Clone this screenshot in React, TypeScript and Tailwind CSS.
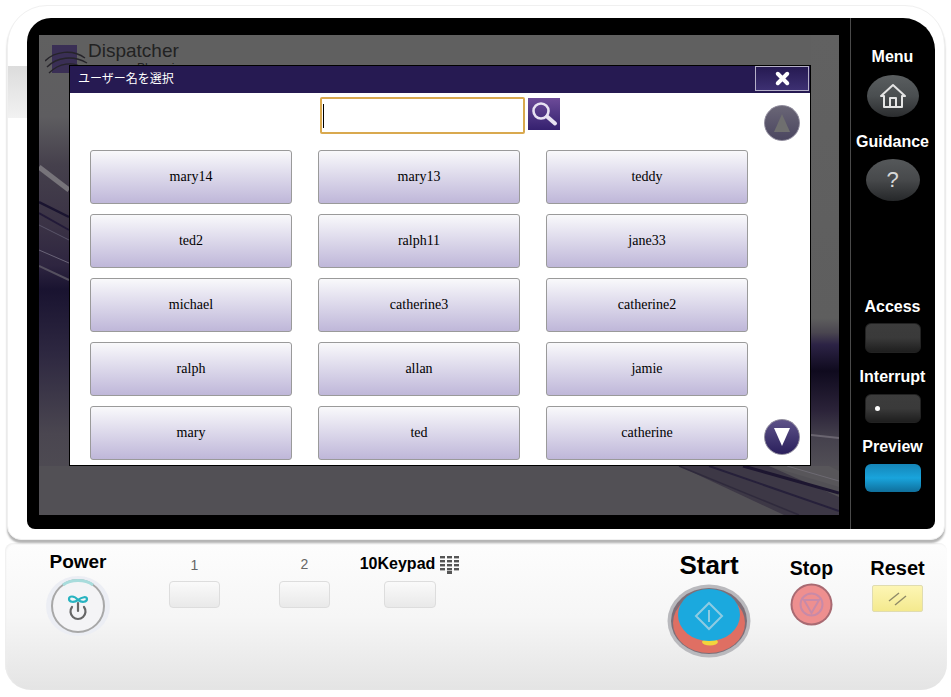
import React from 'react';
import { X } from 'lucide-react';

const users = [
  'mary14', 'mary13', 'teddy',
  'ted2', 'ralph11', 'jane33',
  'michael', 'catherine3', 'catherine2',
  'ralph', 'allan', 'jamie',
  'mary', 'ted', 'catherine',
];

const Wallpaper = () => (
  <svg className="absolute inset-0" width="800" height="480" viewBox="0 0 800 480">
    <defs>
      <linearGradient id="leftStrip" x1="0" y1="0" x2="0" y2="480" gradientUnits="userSpaceOnUse">
        <stop offset="0" stopColor="#606060" />
        <stop offset="0.17" stopColor="#5e5d60" />
        <stop offset="0.27" stopColor="#45404c" />
        <stop offset="0.4" stopColor="#3a3245" />
        <stop offset="0.48" stopColor="#2e2540" />
        <stop offset="0.53" stopColor="#191330" />
        <stop offset="0.66" stopColor="#2d2740" />
        <stop offset="0.83" stopColor="#4a4650" />
        <stop offset="1" stopColor="#525055" />
      </linearGradient>
      <linearGradient id="rightStrip" x1="0" y1="0" x2="0" y2="480" gradientUnits="userSpaceOnUse">
        <stop offset="0" stopColor="#616161" />
        <stop offset="0.59" stopColor="#5e5e5e" />
        <stop offset="0.62" stopColor="#4a4650" />
        <stop offset="0.645" stopColor="#2c2345" />
        <stop offset="0.7" stopColor="#0f0a1e" />
        <stop offset="0.78" stopColor="#2a2238" />
        <stop offset="0.84" stopColor="#45414d" />
        <stop offset="0.93" stopColor="#58565a" />
        <stop offset="1" stopColor="#3a3545" />
      </linearGradient>
    </defs>
    <rect width="800" height="480" fill="#606060" />
    <rect width="30" height="480" fill="url(#leftStrip)" />
    <rect x="772" width="28" height="480" fill="url(#rightStrip)" />
    <rect y="431" width="800" height="49" fill="#525055" />
    <polygon points="640,431 730,431 800,462 800,480 745,480" fill="#3d3846" />
    <polygon points="730,431 790,431 800,436 800,452" fill="#58565a" />
    <g fill="none">
      <path d="M0 132 L30 155" stroke="#77747a" strokeWidth="5" />
      <path d="M0 167 L30 182" stroke="#1a1430" strokeWidth="2.5" />
      <path d="M0 178 L30 195" stroke="#221a38" strokeWidth="2" />
      <path d="M0 190 L30 205" stroke="#5a5468" strokeWidth="1" />
      <path d="M0 215 L30 228" stroke="#6a6478" strokeWidth="1" />
      <path d="M0 231 L30 245" stroke="#55505f" strokeWidth="2" />
      <path d="M772 400 L800 403" stroke="#6a6570" strokeWidth="2" />
      <path d="M704 431 L800 458" stroke="#1d1630" strokeWidth="3" />
      <path d="M670 431 L800 476" stroke="#26203a" strokeWidth="2" />
      <path d="M640 431 L760 480" stroke="#2f2a3c" strokeWidth="1.5" />
      <path d="M748 431 L800 446" stroke="#6d6a72" strokeWidth="1" />
    </g>
  </svg>
);

const Logo = () => (
  <div className="relative flex h-[30px] items-start pl-[6px] pt-[6px]">
    <svg width="44" height="34" viewBox="0 0 44 34" className="shrink-0">
      <rect x="7" y="4" width="25" height="28" fill="#3a2f55" />
      <g fill="none" stroke="#26242a" strokeWidth="1.4">
        <path d="M0 20 C10 10 28 8 40 17" />
        <path d="M2 26 C12 16 28 14 42 22" />
        <path d="M4 32 C14 22 28 20 38 27" />
      </g>
    </svg>
    <div className="relative ml-[-1px] mt-[-1px] w-[130px]">
      <div className="text-[19px] leading-[22px] text-[#222222]">Dispatcher</div>
      <div className="ml-[49px] mt-[-1px] text-[12px] leading-[14px] text-[#222222]">Phoenix</div>
    </div>
  </div>
);

const SearchIcon = () => (
  <svg width="32" height="32" viewBox="0 0 32 32">
    <circle cx="13" cy="13" r="7.5" fill="none" stroke="#e8e2f2" strokeWidth="2.6" />
    <path d="M19 18.5 L27 25.5" stroke="#e8e2f2" strokeWidth="4" strokeLinecap="round" />
  </svg>
);

const UserDialog = () => (
  <div className="absolute left-[30px] top-[30px] flex h-[401px] w-[742px] flex-col border border-black bg-white">
    <div className="flex h-[27px] shrink-0 items-start justify-between bg-[#261a52] pl-[8px] pr-[1px]">
      <span className="mt-[5px] font-['Liberation_Sans','Noto_Sans_CJK_JP',sans-serif] text-[12px] leading-[16px] text-white">
        ユーザー名を選択
      </span>
      <button className="flex h-[25px] w-[54px] items-center justify-center border border-[#b5b0c8] bg-linear-to-b from-[#261a52] to-[#3d3072] text-white">
        <X size={19} strokeWidth={5} />
      </button>
    </div>
    <div className="flex min-h-0 flex-1">
      <div className="w-[678px] pl-[20px]">
        <div className="ml-[230px] mt-[4px] flex h-[37px] items-start">
          <div className="flex h-[37px] w-[205px] items-center rounded-[2px] border-2 border-[#d9a94f] pl-[1px]">
            <div className="h-[24px] w-[1px] bg-black" />
          </div>
          <div className="ml-[3px] mt-[1px] h-[32px] w-[32px] bg-linear-to-b from-[#6d4b98] to-[#35206f]">
            <SearchIcon />
          </div>
        </div>
        <div className="mt-[16px] grid grid-cols-[202px_202px_202px] gap-x-[26px] gap-y-[10px]">
          {users.map((name) => (
            <button
              key={name}
              className="flex h-[54px] items-center justify-center rounded-[3px] border border-[#9a9a9a] bg-linear-to-b from-[#f9f9fb] to-[#bfb7d9] pb-[2px] font-['Liberation_Serif',serif] text-[14px] text-black"
            >
              {name}
            </button>
          ))}
        </div>
      </div>
      <div className="ml-[16px] mt-[12px] mb-[10px] flex w-[36px] flex-col justify-between">
        <div className="flex h-[36px] w-[36px] items-center justify-center rounded-full border border-[#8f8b9c] bg-linear-to-b from-[#6a6676] to-[#4b4660]">
          <svg width="18" height="20" viewBox="0 0 18 20">
            <polygon points="9,1 17,19 1,19" fill="#6f6f6f" />
          </svg>
        </div>
        <div className="flex h-[36px] w-[36px] items-center justify-center rounded-full border border-[#8f8b9c] bg-linear-to-b from-[#5e5288] to-[#2b1f5c]">
          <svg width="18" height="20" viewBox="0 0 18 20">
            <polygon points="1,1 17,1 9,19" fill="#ffffff" />
          </svg>
        </div>
      </div>
    </div>
  </div>
);

const RailLabel = ({ children, className }: { children: React.ReactNode; className: string }) => (
  <div className={`h-[20px] text-[16px] font-bold leading-[20px] text-white ${className}`}>{children}</div>
);

const SideRail = () => (
  <div className="flex flex-1 flex-col items-center border-l border-[#4a4a4a] pr-[1px] pt-[29px]">
    <RailLabel className="">Menu</RailLabel>
    <div className="mt-[8px] flex h-[42px] w-[52px] items-center justify-center rounded-[50%] bg-linear-to-b from-[#5a5e60] via-[#4a4e50] to-[#2b2d2f]">
      <svg width="28" height="26" viewBox="0 0 28 26" fill="none" stroke="#e4e4e4" strokeWidth="2" strokeLinejoin="round">
        <path d="M2 13 L14 2 L26 13 L23 13 L23 24 L5 24 L5 13 Z" />
        <path d="M11 24 L11 15 L17 15 L17 24" />
      </svg>
    </div>
    <RailLabel className="mt-[15px]">Guidance</RailLabel>
    <div className="mt-[7px] flex h-[42px] w-[54px] items-center justify-center rounded-[50%] bg-linear-to-b from-[#55585a] via-[#47494b] to-[#26282a] text-[22px] leading-none text-[#d8d8d8]">
      ?
    </div>
    <RailLabel className="mt-[96px]">Access</RailLabel>
    <div className="mt-[6px] h-[30px] w-[56px] rounded-[6px] border border-[#222222] bg-linear-to-b from-[#3c3c3c] via-[#3a3a3a] to-[#1e1e1e]" />
    <RailLabel className="mt-[14px]">Interrupt</RailLabel>
    <div className="mt-[7px] flex h-[29px] w-[56px] items-center rounded-[6px] border border-[#222222] bg-linear-to-b from-[#3c3c3c] via-[#3a3a3a] to-[#1e1e1e] pl-[9px]">
      <div className="h-[5px] w-[5px] rounded-full bg-white" />
    </div>
    <RailLabel className="mt-[14px]">Preview</RailLabel>
    <div className="mt-[7px] h-[28px] w-[56px] rounded-[6px] bg-linear-to-b from-[#1585b8] via-[#19a4dc] to-[#0f6f9c]" />
  </div>
);

const GreyKey = () => (
  <div className="h-[27px] w-full rounded-[4px] border border-[#dddddd] bg-linear-to-b from-[#fafafa] to-[#e9e9e9]" />
);

const PowerButton = () => (
  <svg className="mt-[2px]" width="66" height="62" viewBox="0 0 66 62">
    <ellipse cx="33" cy="31" rx="32" ry="30" fill="#eceef4" />
    <circle cx="33" cy="31" r="26" fill="#f4f4f6" stroke="#a8a8a8" strokeWidth="2" />
    <path d="M18 10 C26 4 40 4 48 10" fill="none" stroke="#a8dcdc" strokeWidth="3" />
    <path d="M33 25 C29 20 24 21 24 24 C24 27 29 28 33 25 C37 22 42 21 42 24 C42 27 37 28 33 25 Z" fill="none" stroke="#27b3c0" strokeWidth="2.2" />
    <path d="M27 32 A7.5 7.5 0 1 0 39 32" fill="none" stroke="#666666" strokeWidth="2.2" strokeLinecap="round" />
    <path d="M33 28 L33 36" stroke="#666666" strokeWidth="2.2" strokeLinecap="round" />
  </svg>
);

const StartButton = () => (
  <svg className="mt-[4px]" width="84" height="74" viewBox="0 0 84 74">
    <ellipse cx="42" cy="37" rx="41.5" ry="36.5" fill="#b9b9bd" />
    <ellipse cx="42" cy="37" rx="38" ry="33" fill="#7d6f78" />
    <ellipse cx="42" cy="39" rx="36" ry="30" fill="#df6f63" />
    <ellipse cx="43" cy="58" rx="8" ry="3.5" fill="#f2d43c" />
    <ellipse cx="42" cy="31" rx="31" ry="26" fill="#1ba9de" />
    <path d="M42 19 L55 32 L42 45 L29 32 Z" fill="none" stroke="#8ecbe2" strokeWidth="2" />
    <path d="M42 26 L42 38" stroke="#8ecbe2" strokeWidth="2" />
  </svg>
);

const StopButton = () => (
  <svg className="mt-[3px]" width="43" height="43" viewBox="0 0 43 43">
    <circle cx="21.5" cy="21.5" r="21" fill="#a86a72" />
    <circle cx="21.5" cy="21.5" r="19" fill="#ee8f8f" />
    <circle cx="21.5" cy="21.5" r="11" fill="none" stroke="#c88aa8" strokeWidth="2" />
    <polygon points="14,17 29,17 21.5,30" fill="none" stroke="#c88aa8" strokeWidth="2" />
  </svg>
);

const KeypadIcon = () => (
  <svg width="20" height="19" viewBox="0 0 20 19" fill="#555555">
    {[1, 5, 9, 13].map((y) =>
      [0, 7, 14].map((x) => <rect key={`${x}-${y}`} x={x} y={y} width="5" height="2.4" />),
    )}
    <rect x="7" y="16" width="5" height="3" />
  </svg>
);

const ControlPanel = () => (
  <div className="ml-[5px] mt-[3px] flex h-[147px] w-[942px] items-start rounded-b-[26px] rounded-t-[8px] bg-linear-to-b from-[#fdfdfd] via-[#f6f6f6] to-[#e4e4e4] pl-[40px] font-bold shadow-[inset_1px_1px_2px_#eeeeee]">
    <div className="flex w-[66px] flex-col items-center pt-[8px]">
      <div className="h-[22px] text-[19px] leading-[22px] text-black">Power</div>
      <PowerButton />
    </div>
    <div className="ml-[58px] flex w-[51px] flex-col items-center pt-[13px]">
      <div className="mb-[7px] h-[18px] text-[14px] font-normal leading-[18px] text-[#666666]">1</div>
      <GreyKey />
    </div>
    <div className="ml-[59px] flex w-[51px] flex-col items-center pt-[12px]">
      <div className="mb-[8px] h-[18px] text-[14px] font-normal leading-[18px] text-[#666666]">2</div>
      <GreyKey />
    </div>
    <div className="ml-[54px] flex w-[52px] flex-col items-center pt-[12px]">
      <div className="mb-[8px] flex h-[18px] items-center gap-[5px] whitespace-nowrap text-[16px] leading-[18px] text-black">
        10Keypad
        <KeypadIcon />
      </div>
      <GreyKey />
    </div>
    <div className="ml-[231px] flex w-[84px] flex-col items-center pt-[7px]">
      <div className="h-[30px] text-[26px] leading-[30px] text-black">Start</div>
      <StartButton />
    </div>
    <div className="ml-[39px] flex w-[43px] flex-col items-center pt-[13px]">
      <div className="h-[24px] text-[19.5px] leading-[24px] text-black">Stop</div>
      <StopButton />
    </div>
    <div className="ml-[39px] flex w-[51px] flex-col items-center pt-[13px]">
      <div className="h-[24px] text-[20px] leading-[24px] text-black">Reset</div>
      <div className="mt-[5px] flex h-[27px] w-full items-center justify-center rounded-[2px] border border-[#e0dcb0] bg-linear-to-b from-[#fdf6b4] to-[#f4e98e]">
        <svg width="20" height="14" viewBox="0 0 20 14" stroke="#8f8a68" strokeWidth="1.4">
          <path d="M1 9 L11 1" />
          <path d="M7 13 L18 4" />
        </svg>
      </div>
    </div>
  </div>
);

export default function App() {
  return (
    <div className="h-[697px] w-[951px] overflow-hidden bg-white pt-[5px] font-['Liberation_Sans',sans-serif]">
      <div className="relative ml-[7px] h-[535px] w-[938px] rounded-t-[40px] rounded-b-[14px] border border-[#f0f0f0] bg-white pl-[19px] pt-[12px] shadow-[0_3px_2px_#b4b4b4]">
        <div className="absolute left-0 top-[60px] h-[52px] w-[19px] bg-linear-to-b from-[#dcdcdc] to-[#f2f2f2]" />
        <div className="relative flex h-[511px] w-[908px] rounded-b-[8px] rounded-tl-[24px] rounded-tr-[32px] bg-black">
          <div className="relative ml-[12px] mt-[17px] h-[480px] w-[800px] overflow-hidden bg-[#606060]">
            <Wallpaper />
            <Logo />
            <UserDialog />
          </div>
          <div className="w-[11px]" />
          <SideRail />
        </div>
      </div>
      <ControlPanel />
    </div>
  );
}
